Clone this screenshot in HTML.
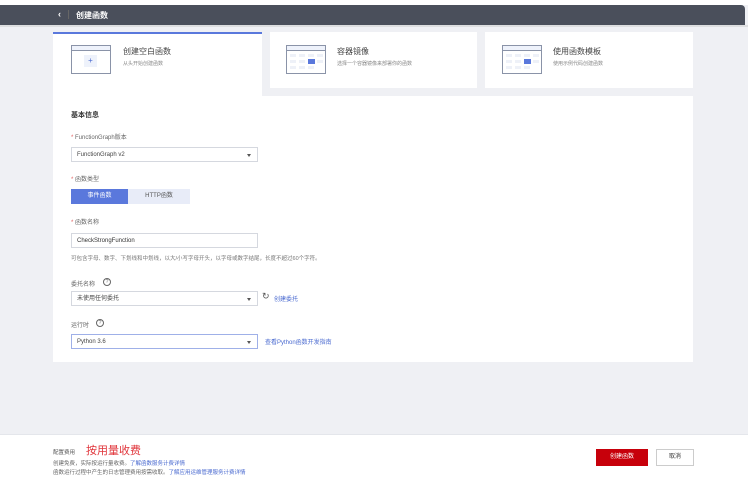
<!DOCTYPE html><html><head><meta charset="utf-8"><style>
*{margin:0;padding:0;box-sizing:border-box}
body{width:748px;height:481px;background:#eff0f4;font-family:"Liberation Sans","Noto Sans CJK SC",sans-serif;position:relative;overflow:hidden;color:#333}
.a{position:absolute}
.top{left:0;top:0;width:748px;height:5px;background:#fff}
.bar{left:0;top:5px;width:745px;height:20px;background:#4a4f5b;border-top-right-radius:4px;color:#fff;font-size:8px;font-weight:bold}
.card{background:#fff}
.t{font-size:8px;color:#444}
.s{font-size:5px;color:#888}
.lab{font-size:6px;color:#666}
.lab b{color:#e06060;font-weight:normal}
.sel{background:#fff;border:1px solid #d5d8df;height:15px;width:187px;font-size:6px;color:#444;padding:4px 5px;line-height:6px}
.sel:after{content:"";position:absolute;right:6px;top:6px;border:2.5px solid transparent;border-top:3px solid #555}
.lnk{font-size:6px;color:#4a6ad0}
.ico{border:1px solid #8a93a8;background:#fff;width:40px;height:29px}
.ico:before{content:"";position:absolute;left:0;top:0;right:0;height:4px;border-bottom:1px solid #8a93a8;background:#eef2fb}
.g{position:absolute;width:6px;height:3px;background:#eef1f8}
.q{width:8px;height:8px;border:1px solid #666;border-radius:50%;font-size:5px;text-align:center;line-height:6px;color:#666}
</style></head><body>
<div class="a top"></div>
<div class="a bar"><span class="a" style="left:58px;top:4px;font-size:9px">&#8249;</span><span class="a" style="left:68px;top:5px;width:1px;height:9px;background:#666"></span><span class="a" style="left:76px;top:5px">创建函数</span></div>
<div class="a" style="left:0;top:25px;width:748px;height:2px;background:#ccc;opacity:.5"></div>
<div class="a card" style="left:53px;top:32px;width:209px;height:66px;border-top:2px solid #5a78dc"></div>
<div class="a card" style="left:270px;top:32px;width:207px;height:56px"></div>
<div class="a card" style="left:485px;top:32px;width:208px;height:56px"></div>
<div class="a ico" style="left:71px;top:45px"><div class="a" style="left:12px;top:9px;width:13px;height:12px;background:#eef2fb;color:#4a6ad0;font-size:8px;text-align:center;line-height:12px">+</div></div>
<div class="a t" style="left:123px;top:46px">创建空白函数</div><div class="a s" style="left:123px;top:60px">从头开始创建函数</div>
<div class="a ico" style="left:286px;top:45px">
<i class="g" style="left:3px;top:8px"></i><i class="g" style="left:12px;top:8px"></i><i class="g" style="left:21px;top:8px"></i><i class="g" style="left:30px;top:8px"></i>
<i class="g" style="left:3px;top:14px"></i><i class="g" style="left:12px;top:14px"></i><i class="g" style="left:30px;top:14px"></i>
<i class="g" style="left:3px;top:20px"></i><i class="g" style="left:12px;top:20px"></i><i class="g" style="left:21px;top:20px"></i>
<div class="a" style="left:21px;top:13px;width:7px;height:5px;background:#5a78dc"></div></div>
<div class="a t" style="left:337px;top:46px">容器镜像</div><div class="a s" style="left:337px;top:60px">选择一个容器镜像来部署你的函数</div>
<div class="a ico" style="left:502px;top:45px">
<i class="g" style="left:3px;top:8px"></i><i class="g" style="left:12px;top:8px"></i><i class="g" style="left:21px;top:8px"></i><i class="g" style="left:30px;top:8px"></i>
<i class="g" style="left:3px;top:14px"></i><i class="g" style="left:12px;top:14px"></i><i class="g" style="left:30px;top:14px"></i>
<i class="g" style="left:3px;top:20px"></i><i class="g" style="left:12px;top:20px"></i><i class="g" style="left:21px;top:20px"></i>
<div class="a" style="left:21px;top:13px;width:7px;height:5px;background:#5a78dc"></div></div>
<div class="a t" style="left:553px;top:46px">使用函数模板</div><div class="a s" style="left:553px;top:60px">使用示例代码创建函数</div>
<div class="a card" style="left:53px;top:96px;width:640px;height:266px"></div>
<div class="a" style="left:71px;top:110px;font-size:7px;font-weight:bold">基本信息</div>
<div class="a lab" style="left:71px;top:132px"><b>* </b>FunctionGraph版本</div>
<div class="a sel" style="left:71px;top:147px">FunctionGraph v2</div>
<div class="a lab" style="left:71px;top:174px"><b>* </b>函数类型</div>
<div class="a" style="left:71px;top:189px;width:57px;height:15px;background:#5a78dc;color:#fff;font-size:6px;text-align:center;line-height:15px">事件函数</div>
<div class="a" style="left:128px;top:189px;width:62px;height:15px;background:#e8ecf8;color:#555;font-size:6px;text-align:center;line-height:15px">HTTP函数</div>
<div class="a lab" style="left:71px;top:217px"><b>* </b>函数名称</div>
<div class="a" style="left:71px;top:233px;width:187px;height:15px;background:#fff;border:1px solid #d5d8df;font-size:6px;padding:4px 5px;line-height:6px">CheckStrongFunction</div>
<div class="a" style="left:71px;top:254px;font-size:5.5px;color:#777">可包含字母、数字、下划线和中划线，以大/小写字母开头，以字母或数字结尾，长度不超过60个字符。</div>
<div class="a lab" style="left:71px;top:279px">委托名称</div><div class="a q" style="left:103px;top:278px">?</div>
<div class="a sel" style="left:71px;top:291px">未使用任何委托</div>
<div class="a" style="left:262px;top:291px;font-size:9px;color:#555">&#8635;</div><div class="a lnk" style="left:274px;top:294px">创建委托</div>
<div class="a lab" style="left:71px;top:320px">运行时</div><div class="a q" style="left:96px;top:319px">?</div>
<div class="a sel" style="left:71px;top:334px;border-color:#9fb0e8">Python 3.6</div>
<div class="a lnk" style="left:265px;top:337px">查看Python函数开发指南</div>
<div class="a" style="left:0;top:434px;width:748px;height:47px;background:#fff;border-top:1px solid #e4e6eb"></div>
<div class="a" style="left:53px;top:448px;font-size:5.5px;color:#555">配置费用</div>
<div class="a" style="left:86px;top:442px;font-size:11px;color:#e0343a">按用量收费</div>
<div class="a" style="left:53px;top:459px;font-size:5.5px;color:#666">创建免费，实际按运行量收费。<span style="color:#4a6ad0">了解函数服务计费详情</span></div>
<div class="a" style="left:53px;top:468px;font-size:5.5px;color:#666">函数运行过程中产生的日志管理费用按需收取。<span style="color:#4a6ad0">了解应用运维管理服务计费详情</span></div>
<div class="a" style="left:596px;top:449px;width:52px;height:17px;background:#c7000b;color:#fff;font-size:6px;text-align:center;line-height:17px">创建函数</div>
<div class="a" style="left:656px;top:449px;width:38px;height:17px;background:#fff;border:1px solid #ccc;color:#333;font-size:6px;text-align:center;line-height:15px">取消</div>
</body></html>
